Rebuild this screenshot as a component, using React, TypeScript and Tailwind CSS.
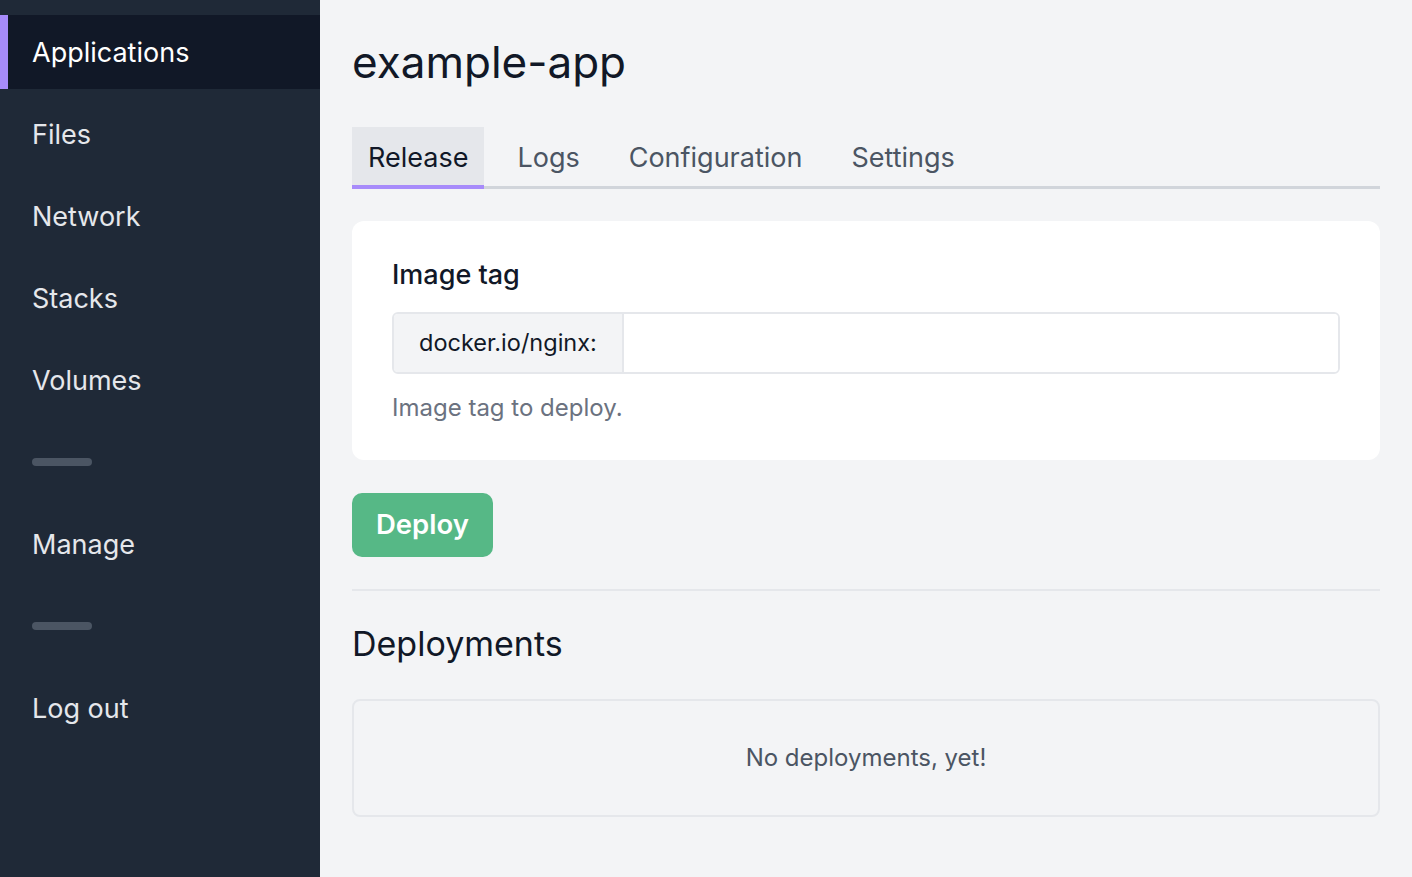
const navItems = ['Applications', 'Files', 'Network', 'Stacks', 'Volumes', '-', 'Manage', '-', 'Log out'];
const tabs = ['Release', 'Logs', 'Configuration', 'Settings'];

function Sidebar() {
  return (
    <aside className="w-[320px] shrink-0 bg-[#1f2937] pt-[15px]">
      <nav className="flex flex-col gap-2">
        {navItems.map((item, i) =>
          item === '-' ? (
            <div key={i} className="flex h-[74px] items-center px-8">
              <div className="h-2 w-[60px] rounded-full bg-[#4b5563]" />
            </div>
          ) : (
            <a
              key={i}
              href="#"
              className={
                i === 0
                  ? 'flex h-[74px] items-center border-l-8 border-[#a78bfa] bg-[#111827] pl-6 pt-[3px] text-[27px] text-white'
                  : 'flex h-[74px] items-center pl-8 pt-[3px] text-[27px] text-[#e5e7eb]'
              }
            >
              {item}
            </a>
          )
        )}
      </nav>
    </aside>
  );
}

export default function App() {
  return (
    <div className="flex min-h-screen bg-[#f3f4f6]" style={{ fontFamily: 'Inter, "Noto Sans", sans-serif' }}>
      <Sidebar />
      <main className="flex-1 px-8 pt-8 pb-10">
        <h1 className="text-[44px] leading-[60px] text-[#111827]">example-app</h1>

        <div className="mt-[35px] flex gap-[17px] shadow-[inset_0_-3px_0_#d1d5db]">
          {tabs.map((t, i) => (
            <button
              key={t}
              className={
                i === 0
                  ? 'flex h-[62px] items-center border-b-4 border-[#a78bfa] bg-[#e5e7eb] px-4 pt-1 text-[27px] text-[#111827]'
                  : 'flex h-[62px] items-center border-b-4 border-transparent px-4 pt-1 text-[27px] text-[#4b5563]'
              }
            >
              {t}
            </button>
          ))}
        </div>

        <section className="mt-8 rounded-xl bg-white p-10">
          <label className="block text-[27px] font-medium leading-[28px] text-[#111827]">Image tag</label>
          <div className="mt-[23px] flex h-[62px] overflow-hidden rounded-md border-2 border-[#e5e7eb]">
            <span className="flex items-center border-r-2 border-[#e5e7eb] bg-[#f3f4f6] px-[25px] text-[23.5px] text-[#111827]">
              docker.io/nginx:
            </span>
            <input className="flex-1 bg-white px-4 text-[24px] outline-none" />
          </div>
          <p className="mt-[22px] text-[24px] leading-6 text-[#6b7280]">Image tag to deploy.</p>
        </section>

        <button className="mt-[33px] h-16 rounded-[10px] bg-[#56b886] px-6 text-[27.5px] font-semibold text-white">
          Deploy
        </button>

        <hr className="mt-[32px] border-t-2 border-[#e5e7eb]" />

        <h2 className="mt-[31px] text-[34px] leading-[44px] text-[#111827]">Deployments</h2>

        <div className="mt-[33px] flex h-[118px] items-center justify-center rounded-lg border-2 border-[#e5e7eb]">
          <p className="text-[24px] text-[#4b5563]">No deployments, yet!</p>
        </div>
      </main>
    </div>
  );
}
